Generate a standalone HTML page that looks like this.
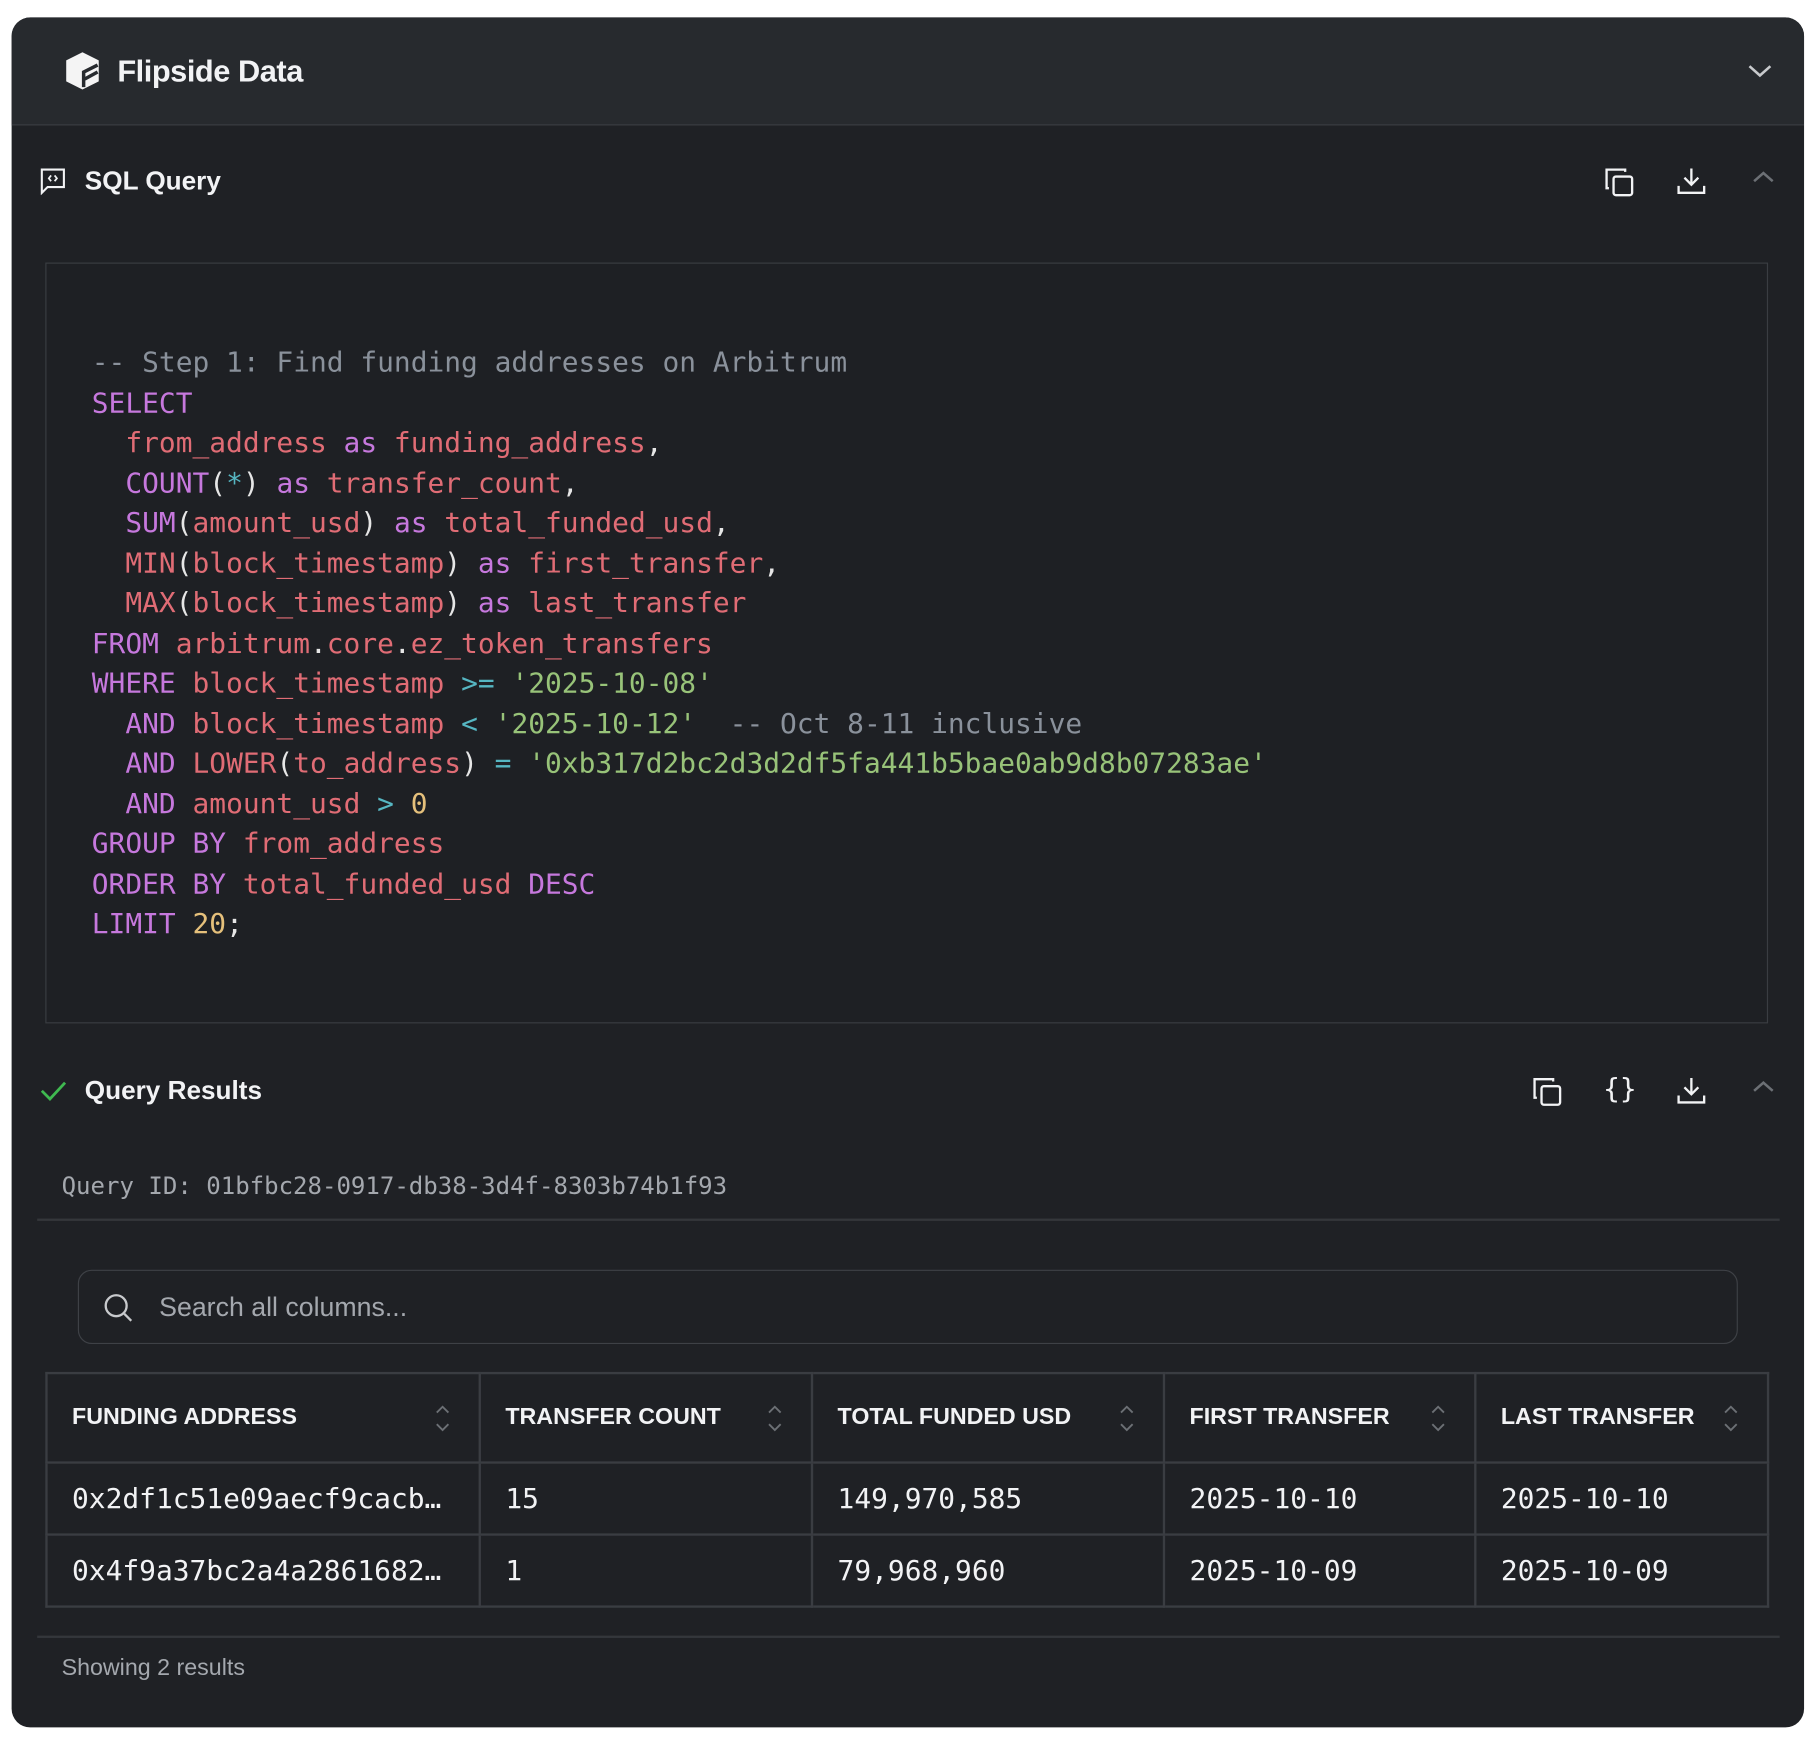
<!DOCTYPE html>
<html><head><meta charset="utf-8"><style>
html,body{margin:0;padding:0;background:#fff;width:1818px;height:1746px;overflow:hidden}
#w{position:absolute;left:0;top:0;width:1565px;height:1503px;transform:scale(1.16166);transform-origin:0 0;font-family:"Liberation Sans",sans-serif;color:#f2f3f5}
.card{position:absolute;left:10px;top:15px;width:1543px;height:1472px;background:#1f2125;border-radius:16px;overflow:hidden}
.hdr{position:absolute;left:0;top:0;width:100%;height:92px;background:#272a2e;border-bottom:1px solid #3a3d42}
.abs{position:absolute}
.code{position:absolute;left:29px;top:211px;width:1483px;height:655px;border:1px solid #3a3d42;background:#1e2024;box-sizing:border-box}
pre{margin:0;position:absolute;left:39px;top:68px;font-family:"DejaVu Sans Mono","Liberation Mono",monospace;font-size:24px;line-height:34.5px;color:#e6e6e6}
.c{color:#8a919b}.k{color:#c678dd}.i{color:#e06c75}.s{color:#98c379}.n{color:#e5c07b}.o{color:#56b6c2}
.ttl{font-size:22.5px;font-weight:bold;color:#f2f3f5}
.mono{font-family:"DejaVu Sans Mono","Liberation Mono",monospace}
table{position:absolute;left:29px;top:1166px;width:1484px;border-collapse:collapse}
td,th{border:2px solid #3a3d42;padding:0 0 0 21px;text-align:left;position:relative}
th{height:75px;font-size:20px;font-weight:bold;color:#f2f3f5}
td{height:60px;font-family:"DejaVu Sans Mono","Liberation Mono",monospace;font-size:24px;color:#f2f3f5}
.sort{position:absolute;right:24px;top:25px}
</style></head><body><div id="w">
<div class="card">
 <div class="hdr">
  <svg class="abs" style="left:45px;top:29px" width="32" height="34" viewBox="0 0 32 34"><path d="M16 1 L30 8 L30 26 L16 33 L2 26 L2 8Z" fill="#f4f4f4"/><path d="M17 31 L17 18 L29 12 M18 24 L29 18" stroke="#272a2e" stroke-width="3" fill="none"/></svg>
  <div class="abs" style="left:91px;top:31px;font-size:26.5px;font-weight:bold;letter-spacing:-0.4px">Flipside Data</div>
  <svg class="abs" style="left:1493px;top:38px" width="24" height="16" viewBox="0 0 24 16"><path d="M3 4 L12 12 L21 4" stroke="#c8cacd" stroke-width="2.2" fill="none"/></svg>
 </div>
 <svg class="abs" style="left:24px;top:129px" width="24" height="24" viewBox="0 0 24 24" fill="none" stroke="#f2f3f5" stroke-width="1.8"><path d="M2 2 H21 V17 H7 L2 22 Z"/><path d="M10 7 L8 9.5 L10 12 M13 7 L15 9.5 L13 12" stroke-width="1.5"/></svg>
 <div class="abs ttl" style="left:63px;top:128px">SQL Query</div>
 <svg class="abs" style="left:1370px;top:128px" width="28" height="28" viewBox="0 0 28 28" fill="none" stroke="#f2f3f5" stroke-width="2"><rect x="9" y="9" width="16" height="16" rx="2"/><path d="M5 19 H3 V3 H19 V5"/></svg>
 <svg class="abs" style="left:1432px;top:127px" width="28" height="28" viewBox="0 0 28 28" fill="none" stroke="#f2f3f5" stroke-width="2"><path d="M14 3 V17 M8 11 L14 17 L20 11 M3 18 V24 H25 V18"/></svg>
 <svg class="abs" style="left:1496px;top:130px" width="24" height="14" viewBox="0 0 24 14"><path d="M4 11 L12 4 L20 11" stroke="#6c7075" stroke-width="2.2" fill="none"/></svg>

 <div class="code"><pre><span class="c">-- Step 1: Find funding addresses on Arbitrum</span>
<span class="k">SELECT</span>
  <span class="i">from_address</span> <span class="k">as</span> <span class="i">funding_address</span>,
  <span class="k">COUNT</span>(<span class="o">*</span>) <span class="k">as</span> <span class="i">transfer_count</span>,
  <span class="k">SUM</span>(<span class="i">amount_usd</span>) <span class="k">as</span> <span class="i">total_funded_usd</span>,
  <span class="i">MIN</span>(<span class="i">block_timestamp</span>) <span class="k">as</span> <span class="i">first_transfer</span>,
  <span class="i">MAX</span>(<span class="i">block_timestamp</span>) <span class="k">as</span> <span class="i">last_transfer</span>
<span class="k">FROM</span> <span class="i">arbitrum</span>.<span class="i">core</span>.<span class="i">ez_token_transfers</span>
<span class="k">WHERE</span> <span class="i">block_timestamp</span> <span class="o">&gt;=</span> <span class="s">'2025-10-08'</span>
  <span class="k">AND</span> <span class="i">block_timestamp</span> <span class="o">&lt;</span> <span class="s">'2025-10-12'</span>  <span class="c">-- Oct 8-11 inclusive</span>
  <span class="k">AND</span> <span class="i">LOWER</span>(<span class="i">to_address</span>) <span class="o">=</span> <span class="s">'0xb317d2bc2d3d2df5fa441b5bae0ab9d8b07283ae'</span>
  <span class="k">AND</span> <span class="i">amount_usd</span> <span class="o">&gt;</span> <span class="n">0</span>
<span class="k">GROUP BY</span> <span class="i">from_address</span>
<span class="k">ORDER BY</span> <span class="i">total_funded_usd</span> <span class="k">DESC</span>
<span class="k">LIMIT</span> <span class="n">20</span>;</pre></div>

 <svg class="abs" style="left:24px;top:913px" width="24" height="22" viewBox="0 0 24 22"><path d="M2 11 L9 18 L22 4" stroke="#3fb950" stroke-width="2.4" fill="none"/></svg>
 <div class="abs ttl" style="left:63px;top:911px">Query Results</div>
 <svg class="abs" style="left:1308px;top:911px" width="28" height="28" viewBox="0 0 28 28" fill="none" stroke="#f2f3f5" stroke-width="2"><rect x="9" y="9" width="16" height="16" rx="2"/><path d="M5 19 H3 V3 H19 V5"/></svg>
 <div class="abs mono" style="left:1370px;top:908px;font-size:24px;color:#f2f3f5">{}</div>
 <svg class="abs" style="left:1432px;top:910px" width="28" height="28" viewBox="0 0 28 28" fill="none" stroke="#f2f3f5" stroke-width="2"><path d="M14 3 V17 M8 11 L14 17 L20 11 M3 18 V24 H25 V18"/></svg>
 <svg class="abs" style="left:1496px;top:913px" width="24" height="14" viewBox="0 0 24 14"><path d="M4 11 L12 4 L20 11" stroke="#6c7075" stroke-width="2.2" fill="none"/></svg>

 <div class="abs mono" style="left:43px;top:994px;font-size:20.7px;color:#a4a8ae">Query ID: 01bfbc28-0917-db38-3d4f-8303b74b1f93</div>
 <div class="abs" style="left:22px;top:1034px;width:1500px;height:2px;background:#34373b"></div>

 <div class="abs" style="left:57px;top:1078px;width:1427px;height:62px;border:1.5px solid #3e4146;border-radius:12px"></div>
 <svg class="abs" style="left:78px;top:1097px" width="28" height="28" viewBox="0 0 28 28" fill="none" stroke="#c8cacd" stroke-width="2"><circle cx="12" cy="12" r="9"/><path d="M19 19 L25 25"/></svg>
 <div class="abs" style="left:127px;top:1097px;font-size:23px;color:#a4a8ae">Search all columns...</div>

 <table>
  <tr><th style="width:350px">FUNDING ADDRESS<svg class="sort" width="14" height="26" viewBox="0 0 14 26" fill="none" stroke="#6c7075" stroke-width="1.6"><path d="M2 8 L7 3 L12 8 M2 18 L7 23 L12 18"/></svg></th>
  <th style="width:263px">TRANSFER COUNT<svg class="sort" width="14" height="26" viewBox="0 0 14 26" fill="none" stroke="#6c7075" stroke-width="1.6"><path d="M2 8 L7 3 L12 8 M2 18 L7 23 L12 18"/></svg></th>
  <th style="width:280px">TOTAL FUNDED USD<svg class="sort" width="14" height="26" viewBox="0 0 14 26" fill="none" stroke="#6c7075" stroke-width="1.6"><path d="M2 8 L7 3 L12 8 M2 18 L7 23 L12 18"/></svg></th>
  <th style="width:245px">FIRST TRANSFER<svg class="sort" width="14" height="26" viewBox="0 0 14 26" fill="none" stroke="#6c7075" stroke-width="1.6"><path d="M2 8 L7 3 L12 8 M2 18 L7 23 L12 18"/></svg></th>
  <th>LAST TRANSFER<svg class="sort" width="14" height="26" viewBox="0 0 14 26" fill="none" stroke="#6c7075" stroke-width="1.6"><path d="M2 8 L7 3 L12 8 M2 18 L7 23 L12 18"/></svg></th></tr>
  <tr><td>0x2df1c51e09aecf9cacb…</td><td>15</td><td>149,970,585</td><td>2025-10-10</td><td>2025-10-10</td></tr>
  <tr><td>0x4f9a37bc2a4a2861682…</td><td>1</td><td>79,968,960</td><td>2025-10-09</td><td>2025-10-09</td></tr>
 </table>

 <div class="abs" style="left:22px;top:1393px;width:1500px;height:2px;background:#34373b"></div>
 <div class="abs" style="left:43px;top:1410px;font-size:20px;color:#a4a8ae">Showing 2 results</div>
</div>
</div></body></html>
